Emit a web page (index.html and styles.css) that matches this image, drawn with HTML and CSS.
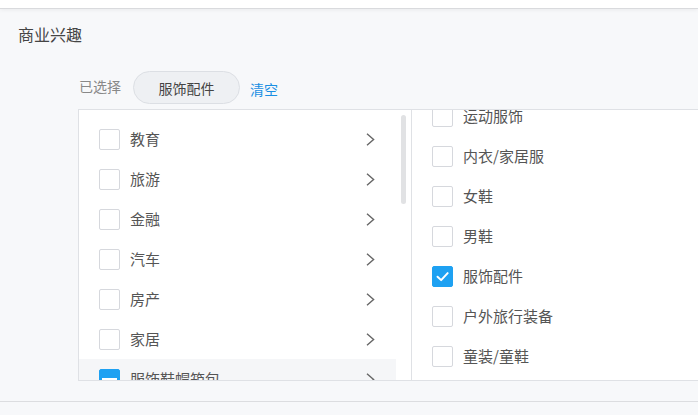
FILE: index.html
```html
<!DOCTYPE html>
<html lang="zh">
<head>
<meta charset="utf-8">
<link rel="stylesheet" href="styles.css">
</head>
<body>
<div class="topbar"></div>
<div class="section">
  <div class="title">商业兴趣</div>
  <div class="selected">
    <span class="sel-label">已选择</span>
    <span class="pill">服饰配件</span>
    <a class="clear">清空</a>
  </div>
  <div class="panel">
    <div class="col-left">
      <div class="list">
        <div class="row"><span class="cb"></span><span class="label">教育</span><svg class="chev" viewBox="0 0 9 13"><path d="M1 0.8 L7.6 6.5 L1 12.2" /></svg></div>
        <div class="row"><span class="cb"></span><span class="label">旅游</span><svg class="chev" viewBox="0 0 9 13"><path d="M1 0.8 L7.6 6.5 L1 12.2" /></svg></div>
        <div class="row"><span class="cb"></span><span class="label">金融</span><svg class="chev" viewBox="0 0 9 13"><path d="M1 0.8 L7.6 6.5 L1 12.2" /></svg></div>
        <div class="row"><span class="cb"></span><span class="label">汽车</span><svg class="chev" viewBox="0 0 9 13"><path d="M1 0.8 L7.6 6.5 L1 12.2" /></svg></div>
        <div class="row"><span class="cb"></span><span class="label">房产</span><svg class="chev" viewBox="0 0 9 13"><path d="M1 0.8 L7.6 6.5 L1 12.2" /></svg></div>
        <div class="row"><span class="cb"></span><span class="label">家居</span><svg class="chev" viewBox="0 0 9 13"><path d="M1 0.8 L7.6 6.5 L1 12.2" /></svg></div>
        <div class="row hover"><span class="cb indet"><span class="bar"></span></span><span class="label">服饰鞋帽箱包</span><svg class="chev" viewBox="0 0 9 13"><path d="M1 0.8 L7.6 6.5 L1 12.2" /></svg></div>
      </div>
      <div class="scrollbar"></div>
    </div>
    <div class="col-right">
      <div class="list shifted">
        <div class="row"><span class="cb"></span><span class="label">运动服饰</span></div>
        <div class="row"><span class="cb"></span><span class="label">内衣/家居服</span></div>
        <div class="row"><span class="cb"></span><span class="label">女鞋</span></div>
        <div class="row"><span class="cb"></span><span class="label">男鞋</span></div>
        <div class="row"><span class="cb checked"><svg viewBox="0 0 21 21"><path d="M5 10.8 L9 14.5 L16.2 6.8" /></svg></span><span class="label">服饰配件</span></div>
        <div class="row"><span class="cb"></span><span class="label">户外旅行装备</span></div>
        <div class="row"><span class="cb"></span><span class="label">童装/童鞋</span></div>
      </div>
    </div>
  </div>
</div>
<div class="footer"></div>
</body>
</html>
```
FILE: styles.css
```css
html, body {
  margin: 0;
  padding: 0;
}
body {
  background: #f7f8fa;
  font-family: "Noto Sans CJK SC", "Noto Sans", sans-serif;
  color: #555;
  height: 415px;
  overflow: hidden;
}
.topbar {
  height: 8px;
  background: #fff;
  border-bottom: 1px solid #d9dadd;
  box-shadow: 0 1px 4px rgba(0, 0, 0, 0.06);
}
.section {
  padding-top: 13px;
}
.title {
  margin-left: 18px;
  font-size: 16px;
  line-height: 24px;
  color: #444;
}
.selected {
  margin-top: 25px;
  margin-left: 79px;
  display: flex;
  align-items: center;
  height: 33px;
}
.sel-label {
  font-size: 14px;
  color: #888;
  line-height: 20px;
  margin-top: -4px;
}
.pill {
  margin-left: 12px;
  width: 107px;
  height: 33px;
  box-sizing: border-box;
  border: 1px solid #dcdfe4;
  border-radius: 17px;
  background: #eef0f3;
  display: flex;
  align-items: center;
  justify-content: center;
  font-size: 14px;
  color: #444;
}
.clear {
  margin-left: 10px;
  font-size: 14px;
  color: #1a8fe3;
  line-height: 20px;
  margin-top: 2px;
}
.panel {
  margin-top: 5px;
  margin-left: 78px;
  height: 272px;
  box-sizing: border-box;
  border: 1px solid #dfe1e5;
  border-right: none;
  background: #fff;
  display: flex;
}
.col-left {
  position: relative;
  width: 332px;
  border-right: 1px solid #dfe1e5;
  overflow: hidden;
}
.col-left .list {
  padding-top: 9px;
  width: 317px;
}
.col-right {
  flex: 1;
  overflow: hidden;
}
.list.shifted {
  margin-top: -14px;
}
.row {
  height: 40px;
  display: flex;
  align-items: center;
  padding-left: 20px;
  padding-right: 21px;
}
.row.hover {
  background: #f5f6f8;
}
.cb {
  width: 21px;
  height: 21px;
  box-sizing: border-box;
  border: 1px solid #d6d8dd;
  border-radius: 2px;
  background: #fff;
  flex: none;
  display: flex;
  align-items: center;
  justify-content: center;
}
.cb.checked,
.cb.indet {
  background: #1ea1f2;
  border-color: #1ea1f2;
}
.cb svg {
  width: 21px;
  height: 21px;
  fill: none;
  stroke: #fff;
  stroke-width: 2.2;
  stroke-linecap: round;
  stroke-linejoin: round;
}
.cb .bar {
  width: 15px;
  height: 3px;
  background: #fff;
}
.label {
  margin-left: 10px;
  font-size: 15px;
  line-height: 20px;
  color: #555;
  flex: 1;
}
.chev {
  width: 9px;
  height: 13px;
  fill: none;
  stroke: #666;
  stroke-width: 1.4;
  flex: none;
}
.scrollbar {
  position: absolute;
  left: 322px;
  top: 5px;
  width: 5px;
  height: 89px;
  border-radius: 3px;
  background: #e1e2e4;
}
.footer {
  margin-top: 20px;
  border-top: 1px solid #dcdde0;
  height: 13px;
}
```
